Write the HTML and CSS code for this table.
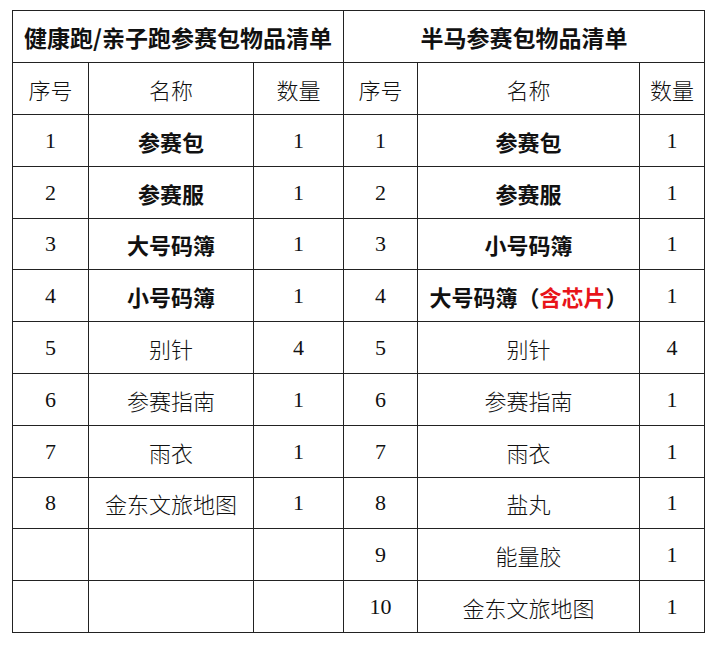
FILE: index.html
```html
<!DOCTYPE html>
<html lang="zh-CN">
<head>
<meta charset="utf-8">
<title>参赛包物品清单</title>
<link rel="stylesheet" href="styles.css">
</head>
<body>
<table class="kit">
  <colgroup>
    <col class="c-no"><col class="c-name"><col class="c-qty">
    <col class="c-no2"><col class="c-name2"><col class="c-qty2">
  </colgroup>
  <tr class="r-title">
    <th colspan="3" class="title">健康跑/亲子跑参赛包物品清单</th>
    <th colspan="3" class="title">半马参赛包物品清单</th>
  </tr>
  <tr class="r52">
    <td>序号</td><td>名称</td><td>数量</td>
    <td>序号</td><td>名称</td><td>数量</td>
  </tr>
  <tr class="r52">
    <td class="num">1</td><td class="b">参赛包</td><td class="num">1</td>
    <td class="num">1</td><td class="b">参赛包</td><td class="num">1</td>
  </tr>
  <tr class="r52">
    <td class="num">2</td><td class="b">参赛服</td><td class="num">1</td>
    <td class="num">2</td><td class="b">参赛服</td><td class="num">1</td>
  </tr>
  <tr class="r51">
    <td class="num">3</td><td class="b">大号码簿</td><td class="num">1</td>
    <td class="num">3</td><td class="b">小号码簿</td><td class="num">1</td>
  </tr>
  <tr class="r52">
    <td class="num">4</td><td class="b">小号码簿</td><td class="num">1</td>
    <td class="num">4</td><td class="b">大号码簿（<span class="red">含芯片</span>）</td><td class="num">1</td>
  </tr>
  <tr class="r52">
    <td class="num">5</td><td>别针</td><td class="num">4</td>
    <td class="num">5</td><td>别针</td><td class="num">4</td>
  </tr>
  <tr class="r52">
    <td class="num">6</td><td>参赛指南</td><td class="num">1</td>
    <td class="num">6</td><td>参赛指南</td><td class="num">1</td>
  </tr>
  <tr class="r52">
    <td class="num">7</td><td>雨衣</td><td class="num">1</td>
    <td class="num">7</td><td>雨衣</td><td class="num">1</td>
  </tr>
  <tr class="r51">
    <td class="num">8</td><td>金东文旅地图</td><td class="num">1</td>
    <td class="num">8</td><td>盐丸</td><td class="num">1</td>
  </tr>
  <tr class="r52">
    <td></td><td></td><td></td>
    <td class="num">9</td><td>能量胶</td><td class="num">1</td>
  </tr>
  <tr class="r52">
    <td></td><td></td><td></td>
    <td class="num">10</td><td>金东文旅地图</td><td class="num">1</td>
  </tr>
</table>
</body>
</html>
```
FILE: styles.css
```css
html, body {
  margin: 0;
  padding: 0;
  background: #fff;
}

body {
  padding: 10px 0 0 12px;
}

.kit {
  border-collapse: collapse;
  table-layout: fixed;
  width: 692px;
  font-family: "Liberation Serif", "Noto Sans CJK SC", serif;
  font-size: 22px;
  color: #111;
}

.c-no { width: 76px; }
.c-name { width: 165px; }
.c-qty { width: 90px; }
.c-no2 { width: 74px; }
.c-name2 { width: 222px; }
.c-qty2 { width: 65px; }

.kit th,
.kit td {
  border: 1px solid #222;
  padding: 0;
  text-align: center;
  vertical-align: middle;
  white-space: nowrap;
  font-weight: 300;
}

.r-title { height: 52px; }
.r52 { height: 52px; }
.r51 { height: 51px; }

.kit .title {
  font-family: "Noto Sans CJK SC", sans-serif;
  font-weight: 700;
  font-size: 23px;
}

.kit .b {
  font-weight: 700;
}

.kit .num {
  font-weight: 400;
}

.red {
  color: #e8141a;
}
```
